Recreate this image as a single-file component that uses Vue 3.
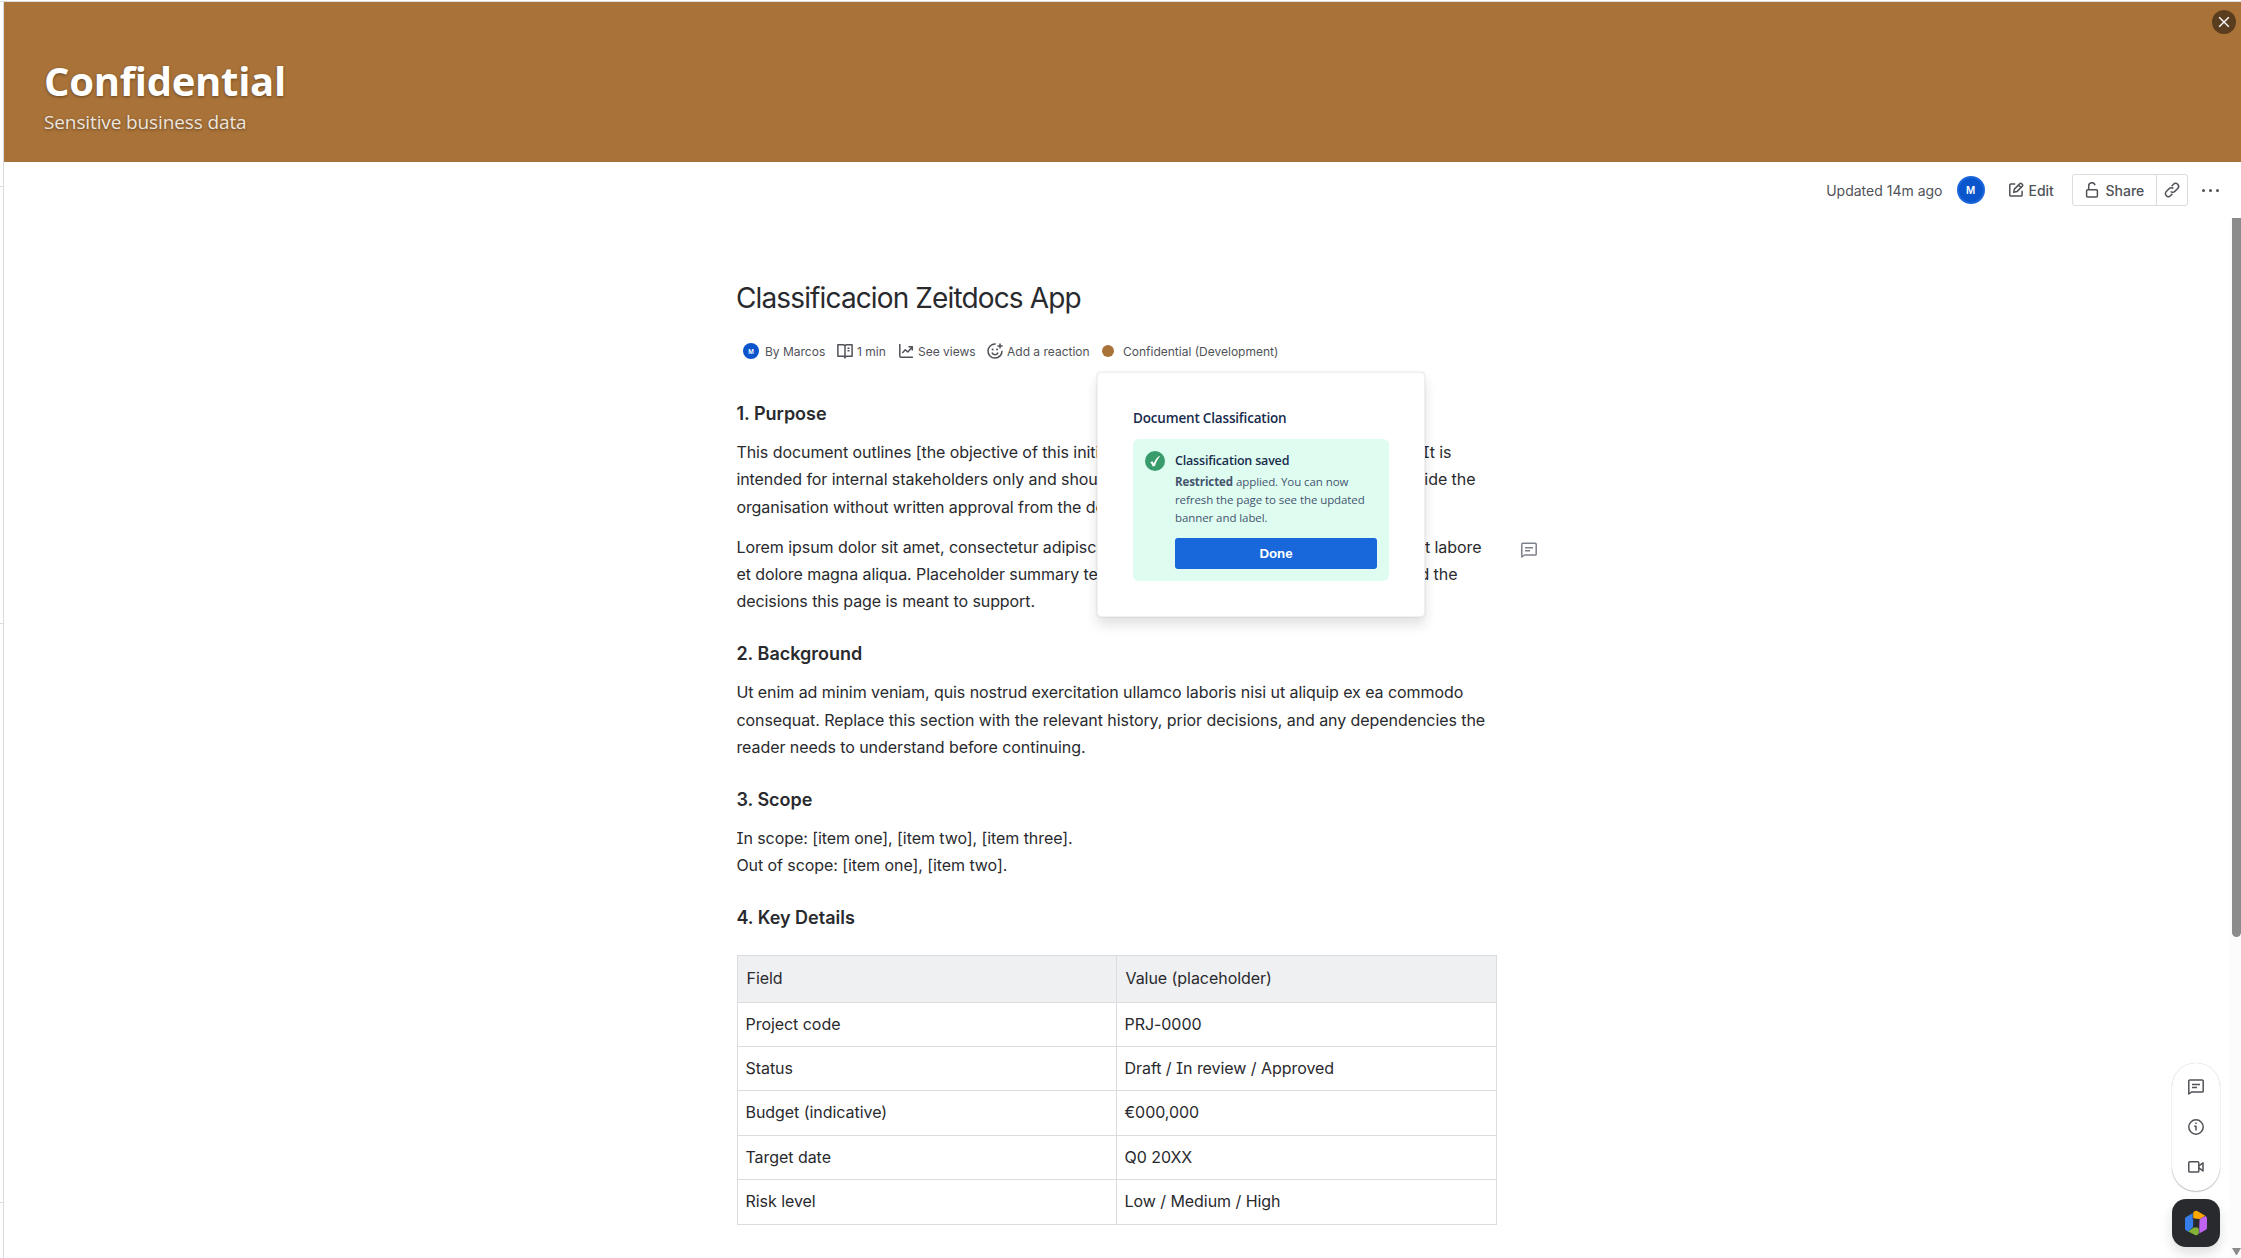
<script setup>
const rows = [
  { field: 'Project code', value: 'PRJ-0000', height: 44 },
  { field: 'Status', value: 'Draft / In review / Approved', height: 44 },
  { field: 'Budget (indicative)', value: '€000,000', height: 45 },
  { field: 'Target date', value: 'Q0 20XX', height: 44 },
  { field: 'Risk level', value: 'Low / Medium / High', height: 45 },
]
</script>

<template>
  <div class="page">
    <aside class="rail"><i></i><i></i><i></i></aside>

    <div class="main">
      <header class="banner">
        <h1>Confidential</h1>
        <p>Sensitive business data</p>
        <button class="close" aria-label="Close">
          <svg width="12" height="12" viewBox="0 0 12 12"><path d="M1.2 1.2l9.6 9.6M10.8 1.2l-9.6 9.6" /></svg>
        </button>
      </header>

      <nav class="toolbar">
        <span class="updated">Updated 14m ago</span>
        <span class="avatar">M</span>
        <button class="edit">
          <svg class="ico" viewBox="0 0 16 16"><path d="M7.2 1.9H2.9a1.1 1.1 0 0 0-1.1 1.1v10a1.1 1.1 0 0 0 1.1 1.1H13a1.1 1.1 0 0 0 1.1-1.1V8.8" /><path d="M5.7 10.3l.7-3.2 5.5-5.5a1.1 1.1 0 0 1 1.6 0l.9.9a1.1 1.1 0 0 1 0 1.6L8.9 9.6zM10.6 3.2l2.2 2.2" /></svg>
          <span>Edit</span>
        </button>
        <div class="share-group">
          <button class="share">
            <svg class="ico" viewBox="0 0 16 16"><rect x="2.6" y="7.7" width="10.8" height="7.4" rx="1" /><path d="M4.7 7.7V4a3.2 3.2 0 0 1 6.3-.8" /></svg>
            <span>Share</span>
          </button>
          <button class="link">
            <svg class="ico" viewBox="0 0 16 16"><path d="M7.6 4.2l1.9-1.9a2.9 2.9 0 0 1 4.2 4.2l-2.9 2.9a2.9 2.9 0 0 1-4.2 0" /><path d="M8.4 11.8l-1.9 1.9a2.9 2.9 0 0 1-4.2-4.2l2.9-2.9a2.9 2.9 0 0 1 4.2 0" /></svg>
          </button>
        </div>
        <button class="more"><i></i><i></i><i></i></button>
      </nav>

      <article class="doc">
        <h2 class="title">Classificacion Zeitdocs App</h2>
        <div class="meta">
          <span class="avatar small">M</span>
          <span class="by">By Marcos</span>
          <svg class="ico" viewBox="0 0 16 16"><path d="M8 2.5v13M8 2.7C7.5 2.1 7 1.8 6 1.8H.9v11.5H6.2c.9 0 1.4.3 1.8.9.4-.6.9-.9 1.8-.9h5.3V1.8H10c-1 0-1.5.3-2 .9z" /><path d="M10.5 5.3h2M10.5 7.8h2" /></svg>
          <span class="time">1 min</span>
          <svg class="ico" viewBox="0 0 16 16"><path d="M1.8 1v12.3a1 1 0 0 0 1 1H15" /><path d="M4.3 10l3-3.3 2.5 2.3 4.2-4.8M10.5 3.7h3.8v3.8" /></svg>
          <span class="views">See views</span>
          <svg class="ico" viewBox="0 0 16 16"><path d="M8.7 1.1A7 7 0 1 0 15 7.7M4.9 9.6a3.3 3.3 0 0 0 6.2 0M13 .4v5.2M10.4 3h5.2" /><circle class="dot" cx="5.6" cy="6.5" r="1" /><circle class="dot" cx="10" cy="6.5" r="1" /></svg>
          <span class="react">Add a reaction</span>
          <i class="level"></i>
          <span class="label">Confidential (Development)</span>
        </div>

        <h3>1. Purpose</h3>
        <p>
          This document outlines [the objective of this initiative<span class="tail-a">It is</span><br />
          intended for internal stakeholders only and should<span class="tail-b">outside the</span><br />
          organisation without written approval from the doc
        </p>
        <div class="commented">
          <p>
            Lorem ipsum dolor sit amet, consectetur adipiscing<span class="tail-c">ut labore</span><br />
            et dolore magna aliqua. Placeholder summary text<span class="tail-d">and the</span><br />
            decisions this page is meant to support.
          </p>
          <svg class="ico note" viewBox="0 0 16 16"><path d="M.8 15V2.3a1.1 1.1 0 0 1 1.1-1.1h12.2a1.1 1.1 0 0 1 1.1 1.1v9.6a1.1 1.1 0 0 1-1.1 1.1H3.5z" /><path d="M4 5.8h8M4 8.8h5" /></svg>
        </div>

        <h3>2. Background</h3>
        <p>
          Ut enim ad minim veniam, quis nostrud exercitation ullamco laboris nisi ut aliquip ex ea commodo<br />
          consequat. Replace this section with the relevant history, prior decisions, and any dependencies the<br />
          reader needs to understand before continuing.
        </p>

        <h3>3. Scope</h3>
        <p>
          In scope: [item one], [item two], [item three].<br />
          Out of scope: [item one], [item two].
        </p>

        <h3>4. Key Details</h3>
        <table>
          <thead>
            <tr><th>Field</th><th>Value (placeholder)</th></tr>
          </thead>
          <tbody>
            <tr v-for="row in rows" :key="row.field" :style="{ height: row.height + 'px' }">
              <td>{{ row.field }}</td>
              <td>{{ row.value }}</td>
            </tr>
          </tbody>
        </table>
      </article>
    </div>

    <section class="popup">
      <h4>Document Classification</h4>
      <div class="notice">
        <span class="check">
          <svg width="20" height="20" viewBox="0 0 20 20"><path d="M5.2 11.2l2.3-1 1.2 2.3c1.2-3.2 2.9-5.6 5.6-7.5l.6.5c-2.2 2.4-3.9 5.6-4.9 9.6l-2.2.5c-.6-1.7-1.4-3.1-2.6-4.4z" /></svg>
        </span>
        <div class="body">
          <strong class="saved">Classification saved</strong>
          <p><b>Restricted</b> applied. You can now<br />refresh the page to see the updated<br />banner and label.</p>
          <button>Done</button>
        </div>
      </div>
    </section>

    <div class="float">
      <div class="pill">
        <svg class="ico" viewBox="0 0 16 16"><path d="M.8 15V2.1A1.1 1.1 0 0 1 1.9 1h12.2a1.1 1.1 0 0 1 1.1 1.1v9.8a1.1 1.1 0 0 1-1.1 1.1H3.5z" /><path d="M4 5.5h8M4 8.5h5" /></svg>
        <svg class="ico" viewBox="0 0 16 16"><circle cx="8" cy="8" r="7.2" /><path d="M6.2 7.3H8v4.2M8 3.6v1.5" /></svg>
        <svg class="ico" viewBox="0 0 16 16"><rect x=".8" y="2.8" width="10" height="10.2" rx="1.1" /><path d="M10.8 6.9l4.2-3v8l-4.2-3" /></svg>
      </div>
      <button class="assistant" aria-label="Assistant">
        <svg width="24" height="26" viewBox="0 0 24 26">
          <path fill="#357de8" d="M1 9Q1 7.7 2.1 7L8.7 3.2V8.4Q8.7 9.6 9.3 10.4L9 16.9 4.3 21.8 2.1 20.5Q1 19.8 1 18.5z" />
          <path fill="#fca700" d="M9.2 3Q9.2 2 10.2 1.4L11.2.9Q12.2.5 13.2 1L21.3 5.7 15.8 9 10.3 8.6Q9.2 8.1 9.2 7z" />
          <path fill="#bf63f3" d="M15.6 9.2L21.3 5.9Q23 6.9 23 8.3V17.8Q23 19.1 21.9 19.8L15.3 23.6V16z" />
          <path fill="#82b536" d="M4.3 21.5L9.7 17.6 13.6 17.5Q14.8 18 14.8 19.4V23.1Q14.8 24.1 13.8 24.6L13 24.9Q12 25.4 11 24.9z" />
        </svg>
      </button>
    </div>

    <div class="scrollbar"><span class="thumb"></span><span class="down"></span></div>
  </div>
</template>

<style>
body { background: #fff; overflow: hidden; }
</style>

<style scoped>
* { box-sizing: border-box; }
h1, h2, h3, h4, p { margin: 0; }
button { border: 0; background: none; padding: 0; font: inherit; color: inherit; display: flex; align-items: center; }

.page {
  position: relative;
  display: flex;
  width: 2241px;
  height: 1258px;
  overflow: hidden;
  font-family: Inter, "Liberation Sans", sans-serif;
  color: #292a2e;
  background: #fff;
}
.page::before { content: ""; position: absolute; left: 0; top: 1px; width: 100%; height: 1px; background: #dcdddf; }
.rail { flex: none; width: 4px; border-right: 1px solid #dadbde; padding-top: 186px; margin-top: 1px; display: flex; flex-direction: column; }
.rail i { height: 1px; background: #dadbde; flex: none; margin-top: -1px; }
.rail i + i { margin-top: 436px; }
.rail i + i + i { margin-top: 578px; }

.main { flex: 1; padding-top: 2px; min-width: 0; }

.banner { position: relative; height: 160px; padding: 55px 0 0 40px; background: #a87238; color: #fff; font-family: "Open Sans", "Noto Sans", sans-serif; text-shadow: 0 1px 3px rgba(0, 0, 0, .4); }
.banner h1 { font-size: 40px; line-height: 48px; font-weight: 700; letter-spacing: -.3px; }
.banner p { font-size: 19px; line-height: 26px; margin-top: 4px; letter-spacing: -.12px; color: rgba(255, 255, 255, .85); }
.close { position: absolute; right: 5px; top: 8px; width: 24px; height: 24px; border-radius: 50%; background: #593d1e; justify-content: center; }
.close svg { stroke: #fff; stroke-width: 1.4; fill: none; }

.ico { width: 16px; height: 16px; flex: none; fill: none; stroke: #505258; stroke-width: 1.5; stroke-linejoin: round; overflow: visible; }
.ico .dot { fill: #505258; stroke: none; }

.toolbar { display: flex; align-items: center; height: 56px; padding-right: 22.5px; justify-content: flex-end; font-size: 14px; color: #505258; }
.updated { margin-right: 14px; }
.avatar { display: flex; align-items: center; justify-content: center; width: 28px; height: 28px; border-radius: 50%; background: #0b55cc; border: 2px solid #1b66dc; color: #fff; font-size: 10px; font-weight: 600; }
.edit { margin-left: 23px; gap: 5px; font-weight: 500; width: 48px; }
.share-group { display: flex; margin-left: 16px; height: 32px; width: 116px; border: 1px solid #dbdcdf; border-radius: 3px; }
.share { width: 84px; border-right: 1px solid #dbdcdf; padding-left: 11px; gap: 6px; font-weight: 500; }
.link { flex: 1; justify-content: center; }
.more { margin-left: 14px; width: 17px; justify-content: space-between; }
.more i { width: 3px; height: 3px; border-radius: 50%; background: #505258; }

.doc { width: 760px; margin: 64px 0 0 733px; }
.title { font-size: 28px; line-height: 32px; font-weight: 400; letter-spacing: -.87px; white-space: nowrap; margin-left: -1px; }
.meta { display: flex; align-items: center; height: 24px; margin-top: 25px; padding-left: 6px; font-size: 12px; color: #505258; white-space: nowrap; }
.avatar.small { width: 16px; height: 16px; border-width: 0; font-size: 6px; flex: none; }
.by { width: 72px; margin-left: 6px; }
.time { width: 41px; margin-left: 4px; }
.views { width: 69px; margin-left: 4px; }
.react { width: 95px; margin-left: 4px; }
.level { width: 12px; height: 12px; border-radius: 50%; background: #a87238; margin-right: 9px; }

h3 { font-size: 18px; line-height: 24px; font-weight: 600; margin: 26.1px 0 13.3px -.6px; }
.meta + h3 { margin-top: 38.5px; }
.doc p { font-size: 16px; line-height: 27.43px; letter-spacing: -.07px; white-space: nowrap; font-feature-settings: "cv08"; position: relative; left: -.6px; }
.commented { display: flex; width: 800px; margin-top: 12.4px; justify-content: space-between; }
.note { margin-top: 8.5px; stroke: #7d818a; }
.tail-a, .tail-b, .tail-c, .tail-d { position: absolute; }
.tail-a { right: 45px; }
.tail-b { right: 21px; }
.commented p { width: 760px; }
.tail-c { right: 15px; }
.tail-d { right: 39px; }

table { width: 760px; table-layout: fixed; border-collapse: separate; border-spacing: 0; border: solid #dbdce0; border-width: 1px 0 0 1px; margin-top: 24.8px; font-size: 16px; letter-spacing: -.05px; font-feature-settings: "cv08"; }
th, td { padding: 0 7.5px 1px; border: solid #dbdce0; border-width: 0 1px 1px 0; font-weight: 400; text-align: left; line-height: 20px; }
th { height: 47px; background: #eff0f2; padding: 0 8.5px 2px; }
th:first-child { width: 379px; }

.popup { position: absolute; left: 1097px; top: 372px; width: 328px; height: 245px; padding: 35px; border: 1px solid #f0f0f1; border-radius: 4px; background: #fff; box-shadow: 0 8px 12px rgba(30, 31, 33, .13), 0 0 2px rgba(30, 31, 33, .15); font-family: "Open Sans", "Noto Sans", sans-serif; }
.popup h4 { font-size: 13.5px; line-height: 20px; font-weight: 600; letter-spacing: -.18px; color: #172b4d; margin-bottom: 11px; }
.notice { display: flex; gap: 10px; height: 142px; padding: 12px; border-radius: 6px; background: #dffcf0; }
.check { flex: none; width: 20px; height: 20px; border-radius: 50%; background: #389b6b; }
.check svg { display: block; fill: #fff; }
.body { flex: 1; }
.saved { display: block; font-size: 12.5px; line-height: 18px; font-weight: 600; letter-spacing: -.19px; color: #172b4d; padding-top: 1px; }
.body p { margin: 3px 0 11px; font-size: 11.5px; line-height: 18px; letter-spacing: -.08px; color: #44546f; white-space: nowrap; }
.body button { width: 100%; height: 31px; border-radius: 3px; background: #1868db; color: #fff; justify-content: center; font: 700 13.3px "Liberation Sans", sans-serif; }

.float { position: absolute; left: 2172px; top: 1063px; width: 48px; }
.pill { display: flex; flex-direction: column; align-items: center; gap: 24px; height: 128px; padding-top: 16px; border-radius: 24px; background: #fff; box-shadow: 0 1px 1px rgba(30, 31, 33, .25), 0 0 1px rgba(30, 31, 33, .31); }
.assistant { width: 48px; height: 48px; margin-top: 8px; border-radius: 14px; background: #292a2e; justify-content: center; box-shadow: 0 6px 12px rgba(30, 31, 33, .15); }

.scrollbar { position: absolute; right: 0; top: 218px; bottom: 0; width: 12px; padding-left: 3px; background: #fcfcfc; display: flex; flex-direction: column; justify-content: space-between; }
.thumb { height: 719px; background: #8b8b8b; border-radius: 0 0 5px 5px; }
.down { width: 9px; height: 7px; margin-bottom: 3px; background: #8b8b8b; clip-path: polygon(0 0, 100% 0, 55% 100%, 45% 100%); }
</style>
